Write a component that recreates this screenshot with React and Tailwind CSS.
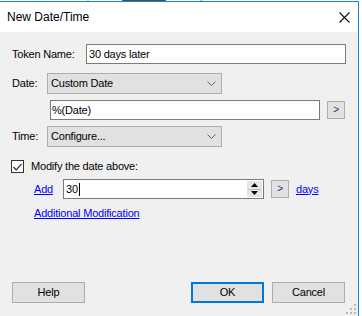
import React from 'react'

const font = "font-['Liberation_Sans',Arial,sans-serif]"

function Chevron() {
  return (
    <svg width="9" height="5" viewBox="0 0 9 5" className="shrink-0">
      <path d="M0.5 0.5 L4.5 4.5 L8.5 0.5" fill="none" stroke="#606060" strokeWidth="1" />
    </svg>
  )
}

function Select({ value }) {
  return (
    <div className="ml-[35px] flex h-[21px] w-[175px] items-center justify-between border border-[#adadad] bg-[#e1e1e1] pl-[3px] pr-[5px] text-black">
      <span>{value}</span>
      <Chevron />
    </div>
  )
}

function ArrowBtn({ className = '' }) {
  return (
    <div className={`flex h-[18px] w-[18px] items-center justify-center border border-[#adadad] bg-[#e1e1e1] pb-[1px] text-[10px] leading-none text-[#2a2a70] ${className}`}>
      &gt;
    </div>
  )
}

function Btn({ children, primary }) {
  return (
    <div
      className={`flex h-[21px] w-[73px] items-center justify-center bg-[#e1e1e1] text-black ${
        primary ? 'border-2 border-[#0078d7]' : 'border border-[#adadad]'
      }`}
    >
      {children}
    </div>
  )
}

export default function App() {
  return (
    <div className={`h-[316px] w-[362px] overflow-hidden bg-white text-[11px] tracking-[-0.2px] ${font}`}>
      {/* bits of the window behind */}
      <div className="flex h-[1px]">
        <div className="ml-[87px] h-[1px] w-[2px] bg-[#e8d44a]" />
        <div className="ml-[33px] h-[1px] w-[44px] bg-[#5a4a3a]" />
        <div className="ml-[34px] h-[1px] w-[3px] bg-[#e8d44a]" />
      </div>

      <div className="flex h-[315px] w-[359px] flex-col border-r border-t border-[#1883d7]">
        {/* title bar */}
        <div className="flex h-[30px] items-center justify-between bg-white pl-[7px] pr-[8px]">
          <span className="text-[12px] tracking-normal text-black">New Date/Time</span>
          <svg width="11" height="11" viewBox="0 0 11 11">
            <path d="M0.5 0.5 L10.5 10.5 M10.5 0.5 L0.5 10.5" stroke="#111" strokeWidth="1.1" />
          </svg>
        </div>

        {/* body */}
        <div className="relative flex flex-1 flex-col bg-[#f0f0f0] pl-[12px] text-black">
          <div className="mt-[12px] flex h-[20px] items-center">
            <span className="w-[74px]">Token Name:</span>
            <div className="flex h-[20px] w-[260px] items-center border border-[#7a7a7a] bg-white pl-[2px]">
              30 days later
            </div>
          </div>

          <div className="mt-[9px] flex h-[21px] items-center">
            <span className="w-[35px]">Date:</span>
            <div className="-ml-[35px]">
              <Select value="Custom Date" />
            </div>
          </div>

          <div className="mt-[6px] flex h-[20px] items-center">
            <div className="ml-[38px] flex h-[20px] w-[270px] items-center border border-[#7a7a7a] bg-white pl-[1px]">
              %(Date)
            </div>
            <ArrowBtn className="ml-[7px]" />
          </div>

          <div className="mt-[6px] flex h-[21px] items-center">
            <span className="w-[35px]">Time:</span>
            <div className="-ml-[35px]">
              <Select value="Configure..." />
            </div>
          </div>

          <div className="mt-[13px] flex h-[13px] items-center">
            <div className="-ml-[1px] flex h-[13px] w-[13px] items-center justify-center border border-[#333] bg-white">
              <svg width="9" height="8" viewBox="0 0 9 8">
                <path d="M0.5 4 L3.2 6.8 L8.5 0.8" fill="none" stroke="#222" strokeWidth="1.2" />
              </svg>
            </div>
            <span className="ml-[7px]">Modify the date above:</span>
          </div>

          <div className="mt-[6px] flex h-[20px] items-center">
            <span className="ml-[22px] w-[29px] text-[#0000ff] underline">Add</span>
            <div className="flex h-[20px] w-[201px] items-center justify-between border border-[#7a7a7a] bg-white pl-[2px] pr-[1px]">
              <span className="flex items-center">
                30<span className="ml-[1px] inline-block h-[13px] w-[1px] bg-black" />
              </span>
              <div className="flex h-[16px] w-[15px] flex-col border border-[#e3e3e3] bg-[#e6e6e6]">
                <div className="flex flex-1 items-center justify-center border-b border-[#bcbcbc]">
                  <svg width="7" height="4" viewBox="0 0 7 4"><path d="M3.5 0 L7 4 L0 4 Z" fill="#000" /></svg>
                </div>
                <div className="flex flex-1 items-center justify-center">
                  <svg width="7" height="4" viewBox="0 0 7 4"><path d="M0 0 L7 0 L3.5 4 Z" fill="#000" /></svg>
                </div>
              </div>
            </div>
            <ArrowBtn className="ml-[7px]" />
            <span className="ml-[7px] text-[#0000ff] underline">days</span>
          </div>

          <div className="mt-[8px] flex h-[13px] items-center">
            <span className="ml-[22px] text-[#0000ff] underline">Additional Modification</span>
          </div>

          <div className="flex-1" />

          <div className="mb-[13px] flex h-[21px] items-center">
            <Btn>Help</Btn>
            <div className="ml-[106px]">
              <Btn primary>OK</Btn>
            </div>
            <div className="ml-[8px]">
              <Btn>Cancel</Btn>
            </div>
          </div>

          {/* size grip */}
          <svg className="absolute bottom-[2px] right-[2px]" width="10" height="10" viewBox="0 0 10 10">
            {[[8, 0], [8, 4], [4, 4], [8, 8], [4, 8], [0, 8]].map(([x, y]) => (
              <rect key={`${x}-${y}`} x={x} y={y} width="2" height="2" fill="#b8b8b8" />
            ))}
          </svg>
        </div>
      </div>
    </div>
  )
}
